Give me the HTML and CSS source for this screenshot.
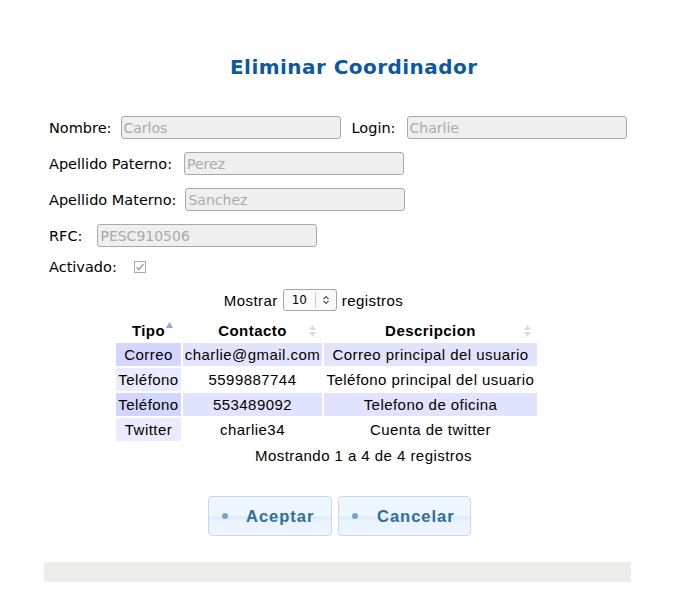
FILE: index.html
```html
<!DOCTYPE html>
<html lang="es">
<head>
<meta charset="utf-8">
<title>Eliminar Coordinador</title>
<link rel="stylesheet" href="styles.css">
</head>
<body>
<div class="page">
  <h1 class="title">Eliminar Coordinador</h1>
  <div class="form">
    <div class="row">
      <label class="lbl lbl-nombre">Nombre:</label>
      <input class="field" type="text" value="Carlos" disabled>
      <label class="lbl lbl-login">Login:</label>
      <input class="field" type="text" value="Charlie" disabled>
    </div>
    <div class="row">
      <label class="lbl lbl-paterno">Apellido Paterno:</label>
      <input class="field" type="text" value="Perez" disabled>
    </div>
    <div class="row">
      <label class="lbl lbl-materno">Apellido Materno:</label>
      <input class="field" type="text" value="Sanchez" disabled>
    </div>
    <div class="row">
      <label class="lbl lbl-rfc">RFC:</label>
      <input class="field" type="text" value="PESC910506" disabled>
    </div>
    <div class="row row-check">
      <label class="lbl">Activado:</label>
      <span class="check">
        <svg width="12" height="12" viewBox="0 0 12 12"><rect x="0.5" y="0.5" width="11" height="11" fill="#fff" stroke="#a8a8a8"/><path d="M2.6 6.2 L4.9 8.6 L9.4 2.8" fill="none" stroke="#8a8a8a" stroke-width="1.2"/></svg>
      </span>
    </div>
  </div>

  <div class="dt">
    <div class="length">
      <span>Mostrar</span>
      <span class="select"><span class="sel-val">10</span><span class="sel-arrow"><svg width="8" height="10" viewBox="0 0 8 10"><path d="M1.5 4 L4 1.5 L6.5 4 M1.5 6 L4 8.5 L6.5 6" fill="none" stroke="#555" stroke-width="1.1"/></svg></span></span>
      <span>registros</span>
    </div>
    <table class="grid">
      <thead>
        <tr>
          <th class="c1"><span class="th-in">Tipo<svg class="asc" width="7" height="6" viewBox="0 0 7 6"><path d="M0 6 L3.5 0 L7 6 Z" fill="#9a9cf5"/></svg></span></th>
          <th class="c2">Contacto<svg class="both" width="7" height="12" viewBox="0 0 7 12"><path d="M0 5 L3.5 0 L7 5 Z M0 7 L3.5 12 L7 7 Z" fill="#dcdcdc"/></svg></th>
          <th class="c3">Descripcion<svg class="both" width="7" height="12" viewBox="0 0 7 12"><path d="M0 5 L3.5 0 L7 5 Z M0 7 L3.5 12 L7 7 Z" fill="#dcdcdc"/></svg></th>
        </tr>
      </thead>
      <tbody>
        <tr class="odd"><td class="s1">Correo</td><td>charlie@gmail.com</td><td>Correo principal del usuario</td></tr>
        <tr class="even"><td class="s1">Teléfono</td><td>5599887744</td><td>Teléfono principal del usuario</td></tr>
        <tr class="odd"><td class="s1">Teléfono</td><td>553489092</td><td>Telefono de oficina</td></tr>
        <tr class="even"><td class="s1">Twitter</td><td>charlie34</td><td>Cuenta de twitter</td></tr>
      </tbody>
    </table>
    <div class="info">Mostrando 1 a 4 de 4 registros</div>
  </div>

  <div class="actions">
    <button class="btn btn-ok" type="button"><span class="dot"></span>Aceptar</button>
    <button class="btn btn-cancel" type="button"><span class="dot"></span>Cancelar</button>
  </div>

  <div class="footer"></div>
</div>
</body>
</html>
```

FILE: styles.css
```css
html, body {
  margin: 0;
  padding: 0;
  background: #fff;
}
body {
  font-family: "DejaVu Sans", sans-serif;
  font-size: 14px;
  color: #000;
}
.page {
  width: 587px;
  margin: 0 auto;
  padding-top: 52px;
}
.title {
  margin: 0;
  padding-left: 186px;
  font-family: "DejaVu Sans", sans-serif;
  font-weight: bold;
  font-size: 20px;
  letter-spacing: 0.45px;
  line-height: 30px;
  color: #0c58a4;
}
.form {
  padding-left: 5px;
  margin-top: 34px;
  display: flex;
  flex-direction: column;
  gap: 13px;
}
.row {
  display: flex;
  align-items: center;
  height: 23px;
}
.lbl {
  font-size: 14.5px;
  margin-right: 11px;
  white-space: nowrap;
}
.lbl-nombre { margin-right: 9px; }
.lbl-paterno { margin-right: 12px; }
.lbl-materno { margin-right: 9px; }
.lbl-rfc { margin-right: 15px; }
.lbl-login {
  margin-left: 11px;
}
.field {
  box-sizing: border-box;
  width: 220px;
  height: 23px;
  margin: 0;
  padding: 0 2px;
  border: 1px solid #a9a9a9;
  border-radius: 3px;
  background: #efefef;
  color: #ababab;
  font-family: "DejaVu Sans", sans-serif;
  font-size: 14px;
}
.row-check {
  height: 14px;
}
.check {
  display: inline-flex;
  margin-left: 6px;
}
.dt {
  margin-top: 15px;
  display: flex;
  flex-direction: column;
  align-items: center;
  font-family: "Liberation Sans", Arial, sans-serif;
  font-size: 15px;
  letter-spacing: 0.45px;
}
.length {
  display: flex;
  align-items: center;
  gap: 5px;
  margin-left: -48px;
  height: 22px;
}
.select {
  display: inline-flex;
  align-items: center;
  box-sizing: border-box;
  width: 54px;
  height: 22px;
  border: 1px solid #a6a6a6;
  border-radius: 3px;
  background: #fafafa;
}
.sel-val {
  flex: 1;
  padding-left: 8px;
  font-family: "DejaVu Sans", sans-serif;
  font-size: 12px;
  letter-spacing: 0;
}
.sel-arrow {
  display: inline-flex;
  align-items: center;
  justify-content: center;
  width: 20px;
  height: 16px;
  border-left: 1px solid #c8c8c8;
}
.grid {
  margin-top: 6px;
  margin-left: -22px;
  border-collapse: separate;
  border-spacing: 2px;
}
.grid th {
  font-weight: bold;
  height: 22px;
  padding: 0;
  text-align: center;
  position: relative;
  white-space: nowrap;
}
.grid th.c1 { width: 65px; }
.grid th.c2 { width: 139px; }
.grid th.c3 { width: 213px; }
.th-in { position: relative; }
.asc {
  position: absolute;
  top: 0px;
  right: -8px;
}
.both {
  position: absolute;
  right: 6px;
  top: 6px;
}
.grid td {
  height: 23px;
  padding: 0;
  text-align: center;
  white-space: nowrap;
}
.odd td { background: #e2e4ff; }
.odd td.s1 { background: #d3d6ff; }
.even td { background: #fff; }
.even td.s1 { background: #eaebff; }
.info {
  margin-top: 4px;
  margin-left: 52px;
  height: 20px;
}
.actions {
  margin-top: 29px;
  display: flex;
  justify-content: center;
  gap: 6px;
  padding-left: 4px;
}
.btn {
  box-sizing: border-box;
  height: 40px;
  padding: 0 14px 0 13px;
  display: inline-flex;
  align-items: center;
  border: 1px solid #c5dbec;
  border-radius: 4px;
  background: linear-gradient(to bottom, #eef6ff 0%, #eef6ff 50%, #dde9f9 52%, #eaf3fe 62%, #eef6ff 100%);
  color: #2e6e9e;
  font-family: "Liberation Sans", Arial, sans-serif;
  font-weight: bold;
  font-size: 16.5px;
  letter-spacing: 1px;
}
.btn-ok { width: 124px; }
.btn-cancel { width: 133px; }
.btn-cancel .dot { margin-right: 19px; }
.dot {
  width: 6px;
  height: 6px;
  border-radius: 50%;
  background: #6fa7d3;
  margin-right: 18px;
}
.footer {
  margin-top: 26px;
  height: 20px;
  background: #edecea;
}
```
